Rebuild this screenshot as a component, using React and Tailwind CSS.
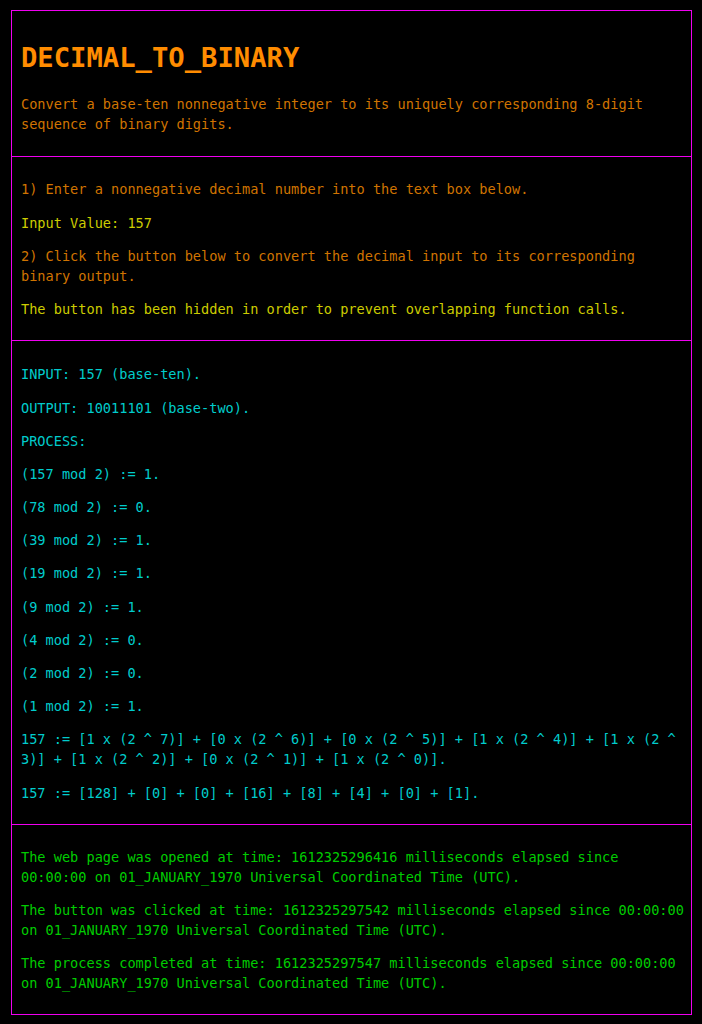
export default function App() {
  const steps = [
    '(157 mod 2) := 1.',
    '(78 mod 2) := 0.',
    '(39 mod 2) := 1.',
    '(19 mod 2) := 1.',
    '(9 mod 2) := 1.',
    '(4 mod 2) := 0.',
    '(2 mod 2) := 0.',
    '(1 mod 2) := 1.',
  ]

  const p = 'my-[13.2px] leading-[20px]'

  return (
    <div className="min-h-screen bg-black pt-[10px] pl-[11px] pb-[10px] font-['DejaVu_Sans_Mono',monospace] text-[13.6px]">
      <div className="w-[681px] border border-[#f000f0]">
        {/* Title */}
        <div className="pt-[9px] pb-[9px] pl-[9px] pr-[4px]">
          <h1 className="mt-[22px] text-[27.2px] font-bold leading-[32px] text-[#ff8c00]">
            DECIMAL_TO_BINARY
          </h1>
          <p className="mt-[20px] mb-[13.2px] leading-[20px] text-[#d07400]">
            Convert a base-ten nonnegative integer to its uniquely corresponding 8-digit sequence of binary digits.
          </p>
        </div>

        {/* Input */}
        <div className="border-t border-[#f000f0] pt-[9px] pb-[8px] pl-[9px] pr-[4px]">
          <p className={`${p} text-[#d07400]`}>1) Enter a nonnegative decimal number into the text box below.</p>
          <p className={`${p} text-[#cccc00]`}>Input Value: 157</p>
          <p className={`${p} text-[#d07400]`}>
            2) Click the button below to convert the decimal input to its corresponding binary output.
          </p>
          <p className={`${p} text-[#cccc00]`}>The button has been hidden in order to prevent overlapping function calls.</p>
        </div>

        {/* Output */}
        <div className="border-t border-[#f000f0] pt-[10px] pb-[8px] pl-[9px] pr-[4px] text-[#00cccc]">
          <p className={p}>INPUT: 157 (base-ten).</p>
          <p className={p}>OUTPUT: 10011101 (base-two).</p>
          <p className={p}>PROCESS:</p>
          {steps.map((s) => (
            <p key={s} className={p}>{s}</p>
          ))}
          <p className={p}>
            157 := [1 x (2 ^ 7)] + [0 x (2 ^ 6)] + [0 x (2 ^ 5)] + [1 x (2 ^ 4)] + [1 x (2 ^ 3)] + [1 x (2 ^ 2)] + [0 x (2 ^ 1)] + [1 x (2 ^ 0)].
          </p>
          <p className={p}>157 := [128] + [0] + [0] + [16] + [8] + [4] + [0] + [1].</p>
        </div>

        {/* Timestamps */}
        <div className="border-t border-[#f000f0] pt-[9px] pb-[7px] pl-[9px] pr-[4px] text-[#00cc00]">
          <p className={p}>
            The web page was opened at time: 1612325296416 milliseconds elapsed since 00:00:00 on 01_JANUARY_1970 Universal Coordinated Time (UTC).
          </p>
          <p className={p}>
            The button was clicked at time: 1612325297542 milliseconds elapsed since 00:00:00 on 01_JANUARY_1970 Universal Coordinated Time (UTC).
          </p>
          <p className={p}>
            The process completed at time: 1612325297547 milliseconds elapsed since 00:00:00 on 01_JANUARY_1970 Universal Coordinated Time (UTC).
          </p>
        </div>
      </div>
    </div>
  )
}
